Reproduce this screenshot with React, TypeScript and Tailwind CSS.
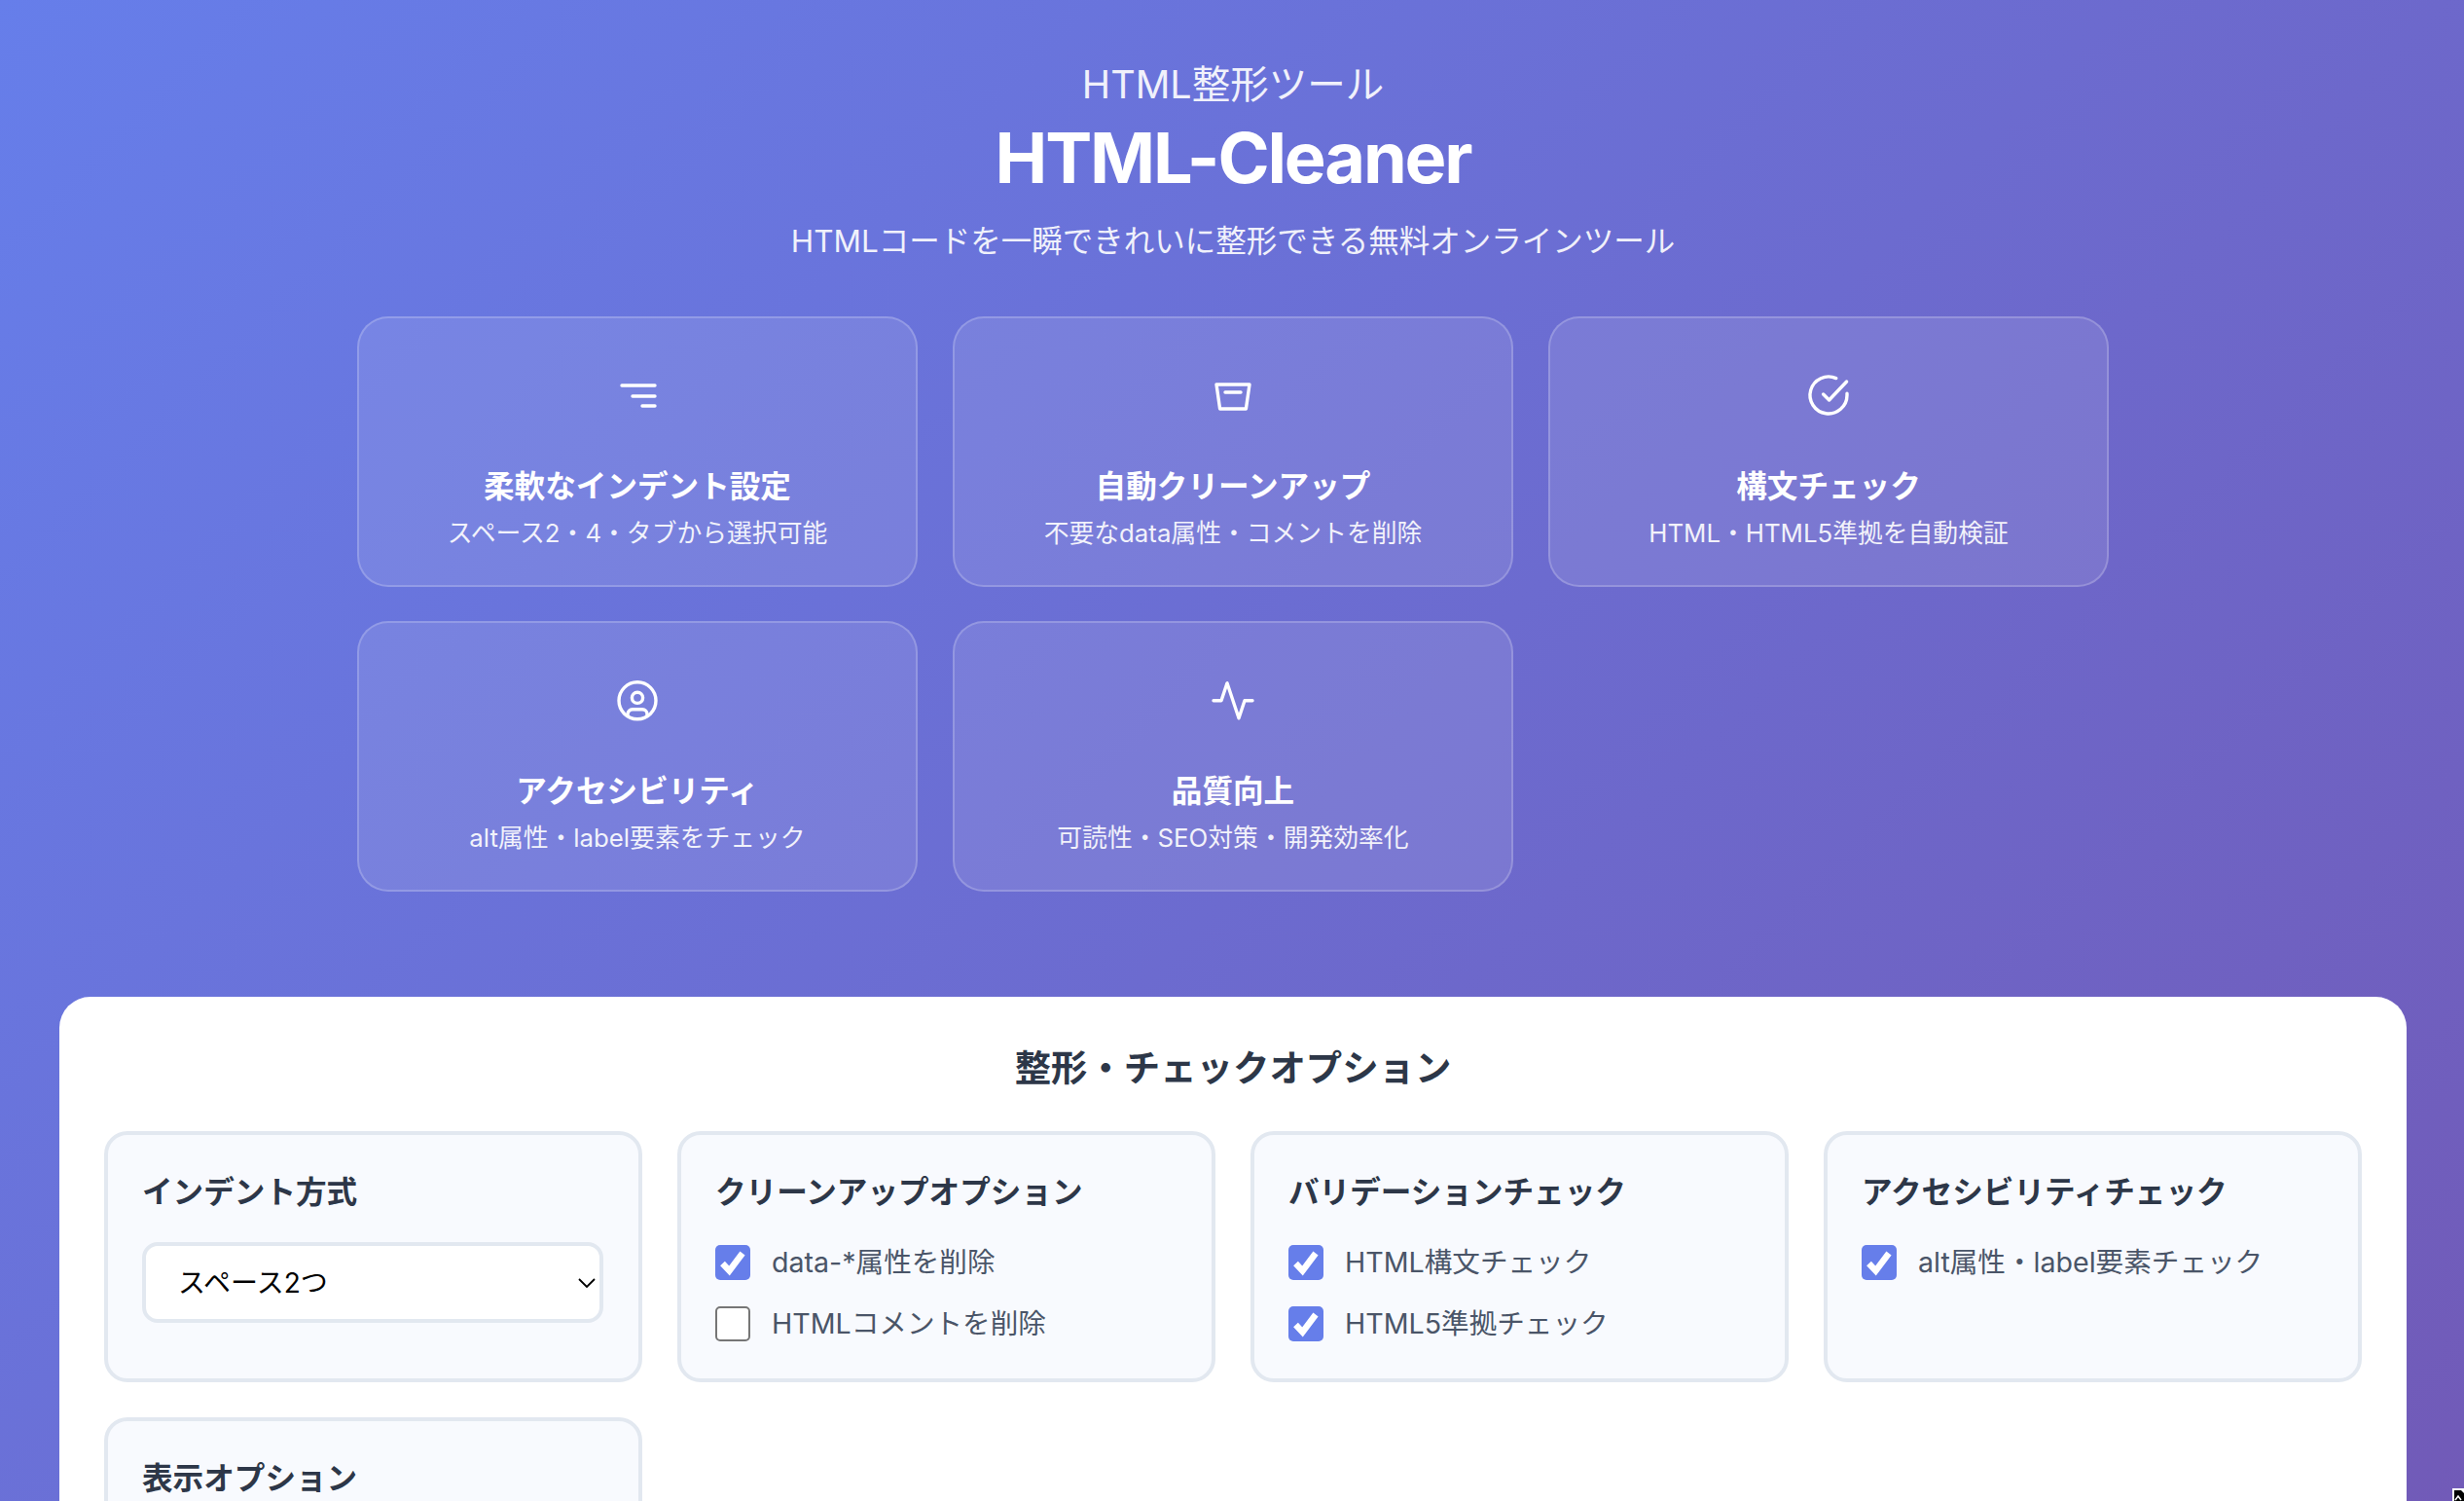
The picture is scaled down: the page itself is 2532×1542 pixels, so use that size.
import React from "react";

const sans = "font-['Inter','Noto_Sans_CJK_JP',sans-serif]";

function Icon({ children }: { children: React.ReactNode }) {
  return (
    <svg viewBox="0 0 24 24" className="w-12 h-12" fill="none" stroke="white" strokeWidth={1.7} strokeLinecap="round" strokeLinejoin="round">
      {children}
    </svg>
  );
}

const features: { title: string; desc: string; icon: React.ReactNode }[] = [
  {
    title: "柔軟なインデント設定",
    desc: "スペース2・4・タブから選択可能",
    icon: (
      <Icon>
        <path d="M4 7h17M9.5 12.5H21M14.5 17.5H21" />
      </Icon>
    ),
  },
  {
    title: "自動クリーンアップ",
    desc: "不要なdata属性・コメントを削除",
    icon: (
      <Icon>
        <path d="M3.5 6.5h17L18.7 19H5.3L3.5 6.5z" />
        <path d="M8 10.5h8" />
      </Icon>
    ),
  },
  {
    title: "構文チェック",
    desc: "HTML・HTML5準拠を自動検証",
    icon: (
      <Icon>
        <path d="M21.5 11.1v.9a9.5 9.5 0 1 1-5.6-8.7" />
        <path d="M9.3 11.5l3 3L21.3 5" />
      </Icon>
    ),
  },
  {
    title: "アクセシビリティ",
    desc: "alt属性・label要素をチェック",
    icon: (
      <Icon>
        <circle cx="12" cy="12.4" r="9.5" />
        <circle cx="12" cy="10.9" r="2.8" />
        <path d="M7 19.9v-.5a2.5 2.5 0 0 1 2.5-2.5h5a2.5 2.5 0 0 1 2.5 2.5v.5" />
      </Icon>
    ),
  },
  {
    title: "品質向上",
    desc: "可読性・SEO対策・開発効率化",
    icon: (
      <Icon>
        <path d="M22 12.4h-4l-3 9-6-18-3 9H2" />
      </Icon>
    ),
  },
];

function Check({ label, checked }: { label: string; checked: boolean }) {
  return (
    <label className="flex items-center gap-[22px] h-9">
      <span
        className={
          checked
            ? "w-9 h-9 rounded-[5px] bg-[#667eea] flex items-center justify-center shrink-0"
            : "w-9 h-9 rounded-[5px] bg-white border-2 border-[#767676] shrink-0"
        }
      >
        {checked && (
          <svg viewBox="0 0 36 36" className="w-9 h-9" fill="none" stroke="white" strokeWidth={6.5}>
            <path d="M7.5 19l7 7.5L28 8.5" />
          </svg>
        )}
      </span>
      <span className="text-[28.6px] leading-9 text-[#4a5568]">{label}</span>
    </label>
  );
}

function OptionCard({ title, children }: { title: string; children?: React.ReactNode }) {
  return (
    <div className="h-[258px] bg-[#f8fafe] border-4 border-[#e2e8f0] rounded-3xl py-9 pl-[35px] pr-9">
      <h3 className="text-[31.6px] leading-[44px] font-bold text-[#2d3748] mt-[1px] mb-[32px]">{title}</h3>
      {children}
    </div>
  );
}

export default function App() {
  return (
    <div className={`h-screen overflow-hidden relative ${sans}`}>
      <div className="min-h-[3300px] bg-[linear-gradient(135deg,#667eea_0%,#764ba2_100%)] pl-[61px] pr-[59px] pt-[60px]">
        <header className="text-center text-white">
          <p className="text-[39.5px] leading-[54px] opacity-90">HTML整形ツール</p>
          <h1 className="text-[72px] leading-[88px] font-bold tracking-[-0.03em] mt-[4px]">HTML-Cleaner</h1>
          <p className="text-[31.5px] leading-[48px] opacity-90 mt-[18px]">HTMLコードを一瞬できれいに整形できる無料オンラインツール</p>
        </header>

        <section className="w-[1800px] mx-auto mt-[53px] grid grid-cols-3 gap-x-9 gap-y-[35px]">
          {features.map((f) => (
            <div
              key={f.title}
              className="h-[278px] rounded-[32px] border-2 border-white/20 bg-white/10 flex flex-col items-center pt-[55px] text-white"
            >
              {f.icon}
              <h3 className="text-[31.6px] leading-[44px] font-bold mt-[48px]">{f.title}</h3>
              <p className="text-[25.8px] leading-[36px] opacity-90 mt-[8px]">{f.desc}</p>
            </div>
          ))}
        </section>

        <main className="mt-[108px] bg-white rounded-t-[32px] px-[46px] pt-[46px] h-[900px]">
          <h2 className="text-center text-[37.4px] leading-[56px] font-bold text-[#2d3748] mb-[36px]">整形・チェックオプション</h2>
          <div className="grid grid-cols-4 gap-9">
            <OptionCard title="インデント方式">
              <div className="relative -mt-[3px]">
                <select className="block w-full h-[83px] appearance-none bg-white border-4 border-[#e2e8f0] rounded-2xl pl-[33px] text-[28px] text-black outline-none">
                  <option>スペース2つ</option>
                </select>
                <svg viewBox="0 0 18 10" className="absolute right-[8px] top-[37px] w-[18px] h-[10px] pointer-events-none" fill="none" stroke="black" strokeWidth={1.8}>
                  <path d="M1 1l8 8 8-8" />
                </svg>
              </div>
            </OptionCard>
            <OptionCard title="クリーンアップオプション">
              <div className="flex flex-col gap-[27px]">
                <Check label="data-*属性を削除" checked />
                <Check label="HTMLコメントを削除" checked={false} />
              </div>
            </OptionCard>
            <OptionCard title="バリデーションチェック">
              <div className="flex flex-col gap-[27px]">
                <Check label="HTML構文チェック" checked />
                <Check label="HTML5準拠チェック" checked />
              </div>
            </OptionCard>
            <OptionCard title="アクセシビリティチェック">
              <div className="flex flex-col gap-[27px]">
                <Check label="alt属性・label要素チェック" checked />
              </div>
            </OptionCard>
            <OptionCard title="表示オプション" />
          </div>
        </main>
      </div>
      <svg viewBox="0 0 12 13" className="absolute right-0 bottom-0 w-3 h-[13px]">
        <rect width="12" height="13" fill="white" />
        <rect x="2" y="2" width="10" height="11" fill="black" />
        <path d="M9 2l3 0 0 3z" fill="white" />
        <path d="M3 12l3-4 3 4" fill="none" stroke="white" strokeWidth="1.5" />
      </svg>
    </div>
  );
}
